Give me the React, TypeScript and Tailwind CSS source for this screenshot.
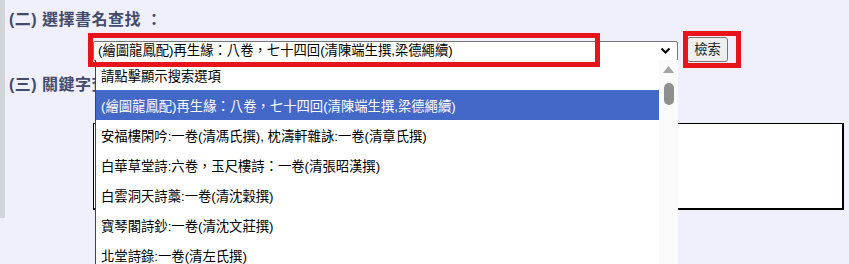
import React from 'react'

const font = { fontFamily: '"Liberation Sans", "Noto Sans CJK TC", sans-serif' }

const options = [
  '請點擊顯示搜索選項',
  '(繪圖龍鳳配)再生緣：八卷，七十四回(清陳端生撰,梁德繩續)',
  '安福樓閑吟:一卷(清馮氏撰), 枕濤軒雜詠:一卷(清章氏撰)',
  '白華草堂詩:六卷，玉尺樓詩：一卷(清張昭漢撰)',
  '白雲洞天詩藁:一卷(清沈穀撰)',
  '寶琴閣詩鈔:一卷(清沈文莊撰)',
  '北堂詩錄:一卷(清左氏撰)',
]

export default function App() {
  return (
    <div
      className="relative flex h-[264px] w-full overflow-hidden bg-[#f0f0fc] text-[13.33px] text-black"
      style={font}
    >
      <div className="h-[218px] w-[5px] shrink-0 bg-[#d3d6d9]" />

      <div className="flex flex-col pl-[4px] pt-[9px]">
        <h2 className="text-[16px] font-bold leading-[22px] tracking-[0.5px] text-[#434b6c]">
          (二) 選擇書名查找 ：
        </h2>

        <div className="ml-[84px] mt-[6px] flex items-start">
          <div className="mt-[4px] flex h-[20px] w-[585px] items-center justify-between rounded-[2px] border border-[#767676] bg-white pl-[4px] pr-[6px] leading-none">
            <span>{options[1]}</span>
            <svg width="11" height="8" viewBox="0 0 11 8">
              <path d="M1.5 1.5 L5.5 5.5 L9.5 1.5" fill="none" stroke="#000" strokeWidth="2" />
            </svg>
          </div>
          <button className="ml-[9px] flex h-[25px] w-[41px] items-center justify-center rounded-[3px] border border-[#767676] bg-[#efefef] text-[13.33px] text-[#222]">
            檢索
          </button>
        </div>

        <h2 className="mt-[12px] text-[16px] font-bold leading-[22px] tracking-[0.5px] text-[#434b6c]">
          (三) 關鍵字查找 ：
        </h2>

        <div className="ml-[84px] mt-[27px] h-[87px] w-[751px] border border-r-2 border-b-2 border-black bg-white" />
      </div>

      {/* open option list */}
      <div className="absolute left-[95px] top-[60px] flex w-[583px] border-l border-[#444] bg-white">
        <ul className="flex-1">
          {options.map((o, i) => (
            <li
              key={o}
              className={
                'flex h-[30px] items-center whitespace-nowrap pl-[5px] pt-[3px] ' +
                (i === 1 ? 'bg-[#4468c8] text-white' : '')
              }
            >
              {o}
            </li>
          ))}
        </ul>
        <div className="flex w-[19px] flex-col items-center bg-[#fafafa] pt-[6px]">
          <svg width="11" height="7" viewBox="0 0 11 7">
            <path d="M0 7 L5.5 0 L11 7 Z" fill="#a3a3a3" />
          </svg>
          <div className="mt-[10px] h-[22px] w-[10px] rounded-full bg-[#8f8f8f]" />
        </div>
      </div>

      {/* red highlight frames */}
      <div className="absolute left-[88px] top-[33px] h-[34px] w-[512px] border-[5px] border-[#e8141c]" />
      <div className="absolute left-[683px] top-[31px] h-[37px] w-[58px] border-[5px] border-[#e8141c]" />
    </div>
  )
}
